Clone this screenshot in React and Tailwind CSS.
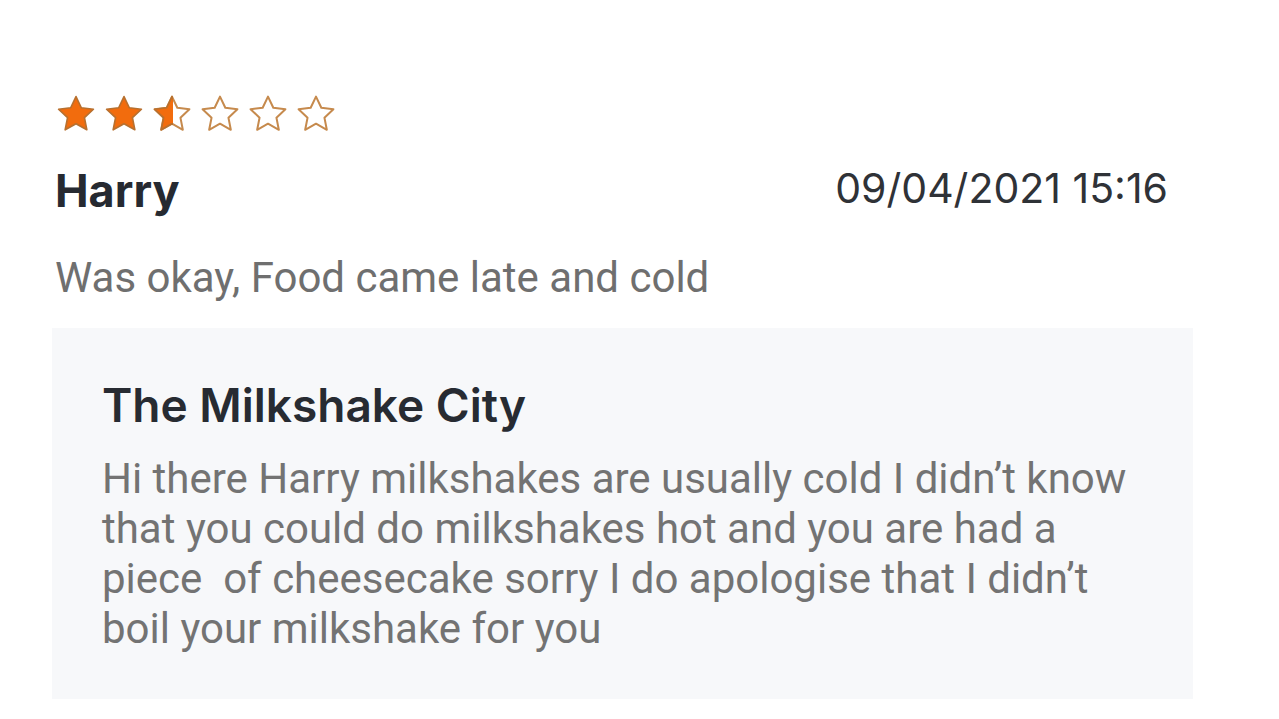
import React from 'react';

const STAR = "M12 2.5l2.9 6.1 6.6.8-4.9 4.6 1.3 6.6L12 17.3l-5.9 3.3 1.3-6.6L2.5 9.4l6.6-.8z";

const Star = ({ fill }) => (
  <svg viewBox="0 0 24 24" className="w-[44px] h-[44px]">
    <defs>
      <clipPath id="half-clip">
        <rect x="0" y="0" width="12.6" height="24" />
      </clipPath>
    </defs>
    {fill === 'full' && <path d={STAR} fill="#f26c0d" stroke="#b7702f" strokeWidth="0.9" strokeLinejoin="round" />}
    {fill === 'half' && (
      <>
        <path d={STAR} fill="none" stroke="#c68a4d" strokeWidth="1.1" strokeLinejoin="round" />
        <path d={STAR} fill="#f26c0d" stroke="#b7702f" strokeWidth="0.9" strokeLinejoin="round" clipPath="url(#half-clip)" />
      </>
    )}
    {fill === 'empty' && <path d={STAR} fill="none" stroke="#c68a4d" strokeWidth="1.1" strokeLinejoin="round" />}
  </svg>
);

const App = () => {
  const stars = ['full', 'full', 'half', 'empty', 'empty', 'empty'];

  return (
    <div className="w-[1279px] h-[719px] bg-white overflow-hidden font-['Roboto',sans-serif]">
      {/* rating */}
      <div className="flex gap-[4px] pl-[54px] pt-[92px]">
        {stars.map((s, i) => <Star key={i} fill={s} />)}
      </div>

      {/* author + date */}
      <div className="flex justify-between items-start pl-[55px] pr-[111px] mt-[28px]">
        <span className="font-['Inter',sans-serif] font-bold text-[45px] leading-[54px] text-[#262a31]">Harry</span>
        <span className="font-['Inter',sans-serif] text-[41px] leading-[48px] text-[#2f3237]">09/04/2021 15:16</span>
      </div>

      <p className="pl-[55px] mt-[35px] text-[42px] leading-[50px] text-[#6f6f6f]">
        Was okay, Food came late and cold
      </p>

      {/* restaurant reply */}
      <div className="ml-[52px] w-[1141px] h-[371px] mt-[25px] bg-[#f7f8fa] px-[50px] pt-[50px]">
        <h2 className="font-['Inter',sans-serif] font-semibold text-[46px] leading-[54px] text-[#272b32]">
          The Milkshake City
        </h2>
        <p className="mt-[22px] text-[42px] leading-[50px] text-[#737373] w-[1040px]">
          Hi there Harry milkshakes are usually cold I didn’t know that you could do milkshakes hot and you are had a piece&nbsp; of cheesecake sorry I do apologise that I didn’t boil your milkshake for you
        </p>
      </div>
    </div>
  );
};

export default App;
